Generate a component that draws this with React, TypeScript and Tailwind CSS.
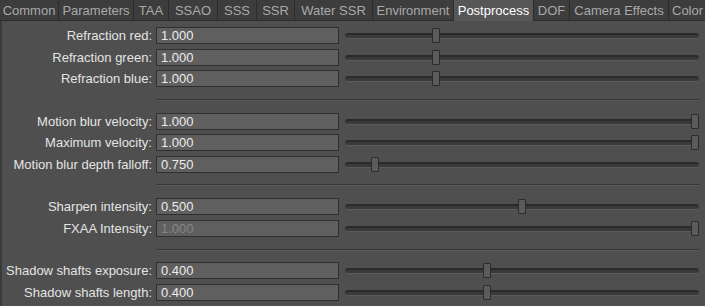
import React from "react";

const tabs: [string, number][] = [
  ["Common", 59],
  ["Parameters", 75],
  ["TAA", 35],
  ["SSAO", 49],
  ["SSS", 39],
  ["SSR", 38],
  ["Water SSR", 78],
  ["Environment", 81],
  ["Postprocess", 80],
  ["DOF", 36],
  ["Camera Effects", 99],
  ["Color", 36],
];

type Row =
  | { sep: true }
  | { sep?: false; label: string; value: string; pos: number; disabled?: boolean };

const rows: Row[] = [
  { label: "Refraction red:", value: "1.000", pos: 0.25 },
  { label: "Refraction green:", value: "1.000", pos: 0.25 },
  { label: "Refraction blue:", value: "1.000", pos: 0.25 },
  { sep: true },
  { label: "Motion blur velocity:", value: "1.000", pos: 1 },
  { label: "Maximum velocity:", value: "1.000", pos: 1 },
  { label: "Motion blur depth falloff:", value: "0.750", pos: 0.075 },
  { sep: true },
  { label: "Sharpen intensity:", value: "0.500", pos: 0.5 },
  { label: "FXAA Intensity:", value: "1.000", pos: 1, disabled: true },
  { sep: true },
  { label: "Shadow shafts exposure:", value: "0.400", pos: 0.4 },
  { label: "Shadow shafts length:", value: "0.400", pos: 0.4 },
];

function Slider({ pos }: { pos: number }) {
  const trackW = 354;
  const left = pos * (trackW - 8);
  return (
    <div className="relative ml-[6px] h-[15px] w-[354px]">
      <div className="absolute left-0 right-0 top-[5px] h-[6px] rounded-full border-t-[2px] border-b border-t-[#2a2a2a] border-b-[#5c5c5c] bg-[#3a3a3a]" />
      <div
        className="absolute top-0 h-[15px] w-[8px] rounded-[1px] border border-[#2b2b2b] bg-[#5b5b5b]"
        style={{ left: `${left}px` }}
      />
    </div>
  );
}

export default function App() {
  return (
    <div
      className="flex h-[306px] w-[705px] flex-col overflow-hidden bg-[#4f4f4f] text-[13px]"
      style={{ fontFamily: '"Liberation Sans", Arial, sans-serif' }}
    >
      <div className="flex h-[21px] shrink-0 border-b border-[#2c2c2c] bg-[#3a3a3a]">
        {tabs.map(([t, w]) => {
          const active = t === "Postprocess";
          const last = t === "Color";
          return (
            <div
              key={t}
              className={
                active
                  ? "flex h-[21px] shrink-0 items-center justify-center border-r border-[#2c2c2c] bg-[#575757] pb-[1px] leading-none text-white"
                  : last
                  ? "flex h-[20px] shrink-0 items-center justify-start overflow-hidden whitespace-nowrap bg-[#3d3d3d] pl-[3px] leading-none text-[#a9a9a9]"
                  : "flex h-[20px] shrink-0 items-center justify-center border-r border-[#2c2c2c] bg-[#3d3d3d] leading-none text-[#a9a9a9]"
              }
              style={{ width: `${w}px` }}
            >
              {t}
            </div>
          );
        })}
      </div>
      <div className="flex flex-1 flex-col border-l-2 border-[#3a3a3a] pt-[4px]">
        {rows.map((r, i) =>
          r.sep ? (
            <div key={i} className="flex h-[21.4px] items-center">
              <div className="ml-[155px] h-[2px] w-[542px] border-b border-[#5a5a5a] bg-[#363636]" />
            </div>
          ) : (
            <div key={i} className="flex h-[21.4px] items-center">
              <div className="w-[150px] whitespace-nowrap text-right leading-none text-[#e4e4e4]">
                {r.label}
              </div>
              <div
                className={
                  "ml-[4px] flex h-[17px] w-[183px] items-center border border-[#2f2f2f] bg-[#5f5f5f] pl-[4px] leading-none " +
                  (r.disabled ? "text-[#858585]" : "text-[#ececec]")
                }
              >
                {r.value}
              </div>
              <Slider pos={r.pos} />
            </div>
          )
        )}
      </div>
    </div>
  );
}
